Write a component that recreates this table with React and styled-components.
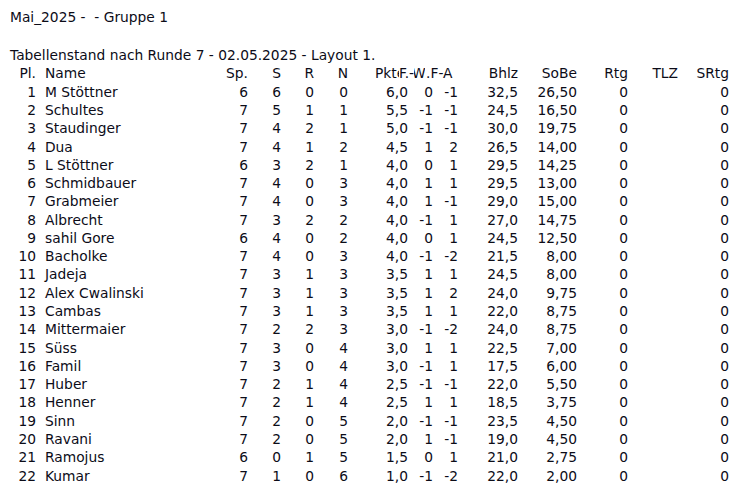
import React from 'react';
import styled, { createGlobalStyle } from 'styled-components';

const rows = [
    [1, 'M Stöttner', 6, 6, 0, 0, '6,0', 0, -1, '32,5', '26,50'],
    [2, 'Schultes', 7, 5, 1, 1, '5,5', -1, -1, '24,5', '16,50'],
    [3, 'Staudinger', 7, 4, 2, 1, '5,0', -1, -1, '30,0', '19,75'],
    [4, 'Dua', 7, 4, 1, 2, '4,5', 1, 2, '26,5', '14,00'],
    [5, 'L Stöttner', 6, 3, 2, 1, '4,0', 0, 1, '29,5', '14,25'],
    [6, 'Schmidbauer', 7, 4, 0, 3, '4,0', 1, 1, '29,5', '13,00'],
    [7, 'Grabmeier', 7, 4, 0, 3, '4,0', 1, -1, '29,0', '15,00'],
    [8, 'Albrecht', 7, 3, 2, 2, '4,0', -1, 1, '27,0', '14,75'],
    [9, 'sahil Gore', 6, 4, 0, 2, '4,0', 0, 1, '24,5', '12,50'],
    [10, 'Bacholke', 7, 4, 0, 3, '4,0', -1, -2, '21,5', '8,00'],
    [11, 'Jadeja', 7, 3, 1, 3, '3,5', 1, 1, '24,5', '8,00'],
    [12, 'Alex Cwalinski', 7, 3, 1, 3, '3,5', 1, 2, '24,0', '9,75'],
    [13, 'Cambas', 7, 3, 1, 3, '3,5', 1, 1, '22,0', '8,75'],
    [14, 'Mittermaier', 7, 2, 2, 3, '3,0', -1, -2, '24,0', '8,75'],
    [15, 'Süss', 7, 3, 0, 4, '3,0', 1, 1, '22,5', '7,00'],
    [16, 'Famil', 7, 3, 0, 4, '3,0', -1, 1, '17,5', '6,00'],
    [17, 'Huber', 7, 2, 1, 4, '2,5', -1, -1, '22,0', '5,50'],
    [18, 'Henner', 7, 2, 1, 4, '2,5', 1, 1, '18,5', '3,75'],
    [19, 'Sinn', 7, 2, 0, 5, '2,0', -1, -1, '23,5', '4,50'],
    [20, 'Ravani', 7, 2, 0, 5, '2,0', 1, -1, '19,0', '4,50'],
    [21, 'Ramojus', 6, 0, 1, 5, '1,5', 0, 1, '21,0', '2,75'],
    [22, 'Kumar', 7, 1, 0, 6, '1,0', -1, -2, '22,0', '2,00'],
];

export default function App(){
    return (
        <>
            <GlobalStyle />
            <Page>
                <Line>Mai_2025 -&nbsp; - Gruppe 1</Line>
                <Line $h={19.3} />
                <Line>Tabellenstand nach Runde 7 - 02.05.2025 - Layout 1.</Line>
                <Row $h={18.8}>
                    <Cell>Pl.</Cell>
                    <Cell left>Name</Cell>
                    <Cell>Sp.</Cell>
                    <Cell>S</Cell>
                    <Cell>R</Cell>
                    <Cell>N</Cell>
                    <Squeezed>
                        <Clip $w={24}>Pkte</Clip>
                        <span>F.-</span>
                        <Clip $w={11} $shift={-2}>W</Clip>
                        <Tail>.F-A</Tail>
                    </Squeezed>
                    <Cell>Bhlz</Cell>
                    <Cell>SoBe</Cell>
                    <Cell>Rtg</Cell>
                    <Cell>TLZ</Cell>
                    <Cell>SRtg</Cell>
                </Row>
                {
                    rows.map((r) =>
                        <Row key={r[0]}>
                            <Cell>{r[0]}</Cell>
                            <Cell left>{r[1]}</Cell>
                            {r.slice(2).map((v, i) => <Cell key={i}>{v}</Cell>)}
                            <Cell>0</Cell>
                            <Cell></Cell>
                            <Cell>0</Cell>
                        </Row>
                    )
                }
            </Page>
        </>
    );
}

const GlobalStyle = createGlobalStyle`
    body{
        margin:0;
        background:#FFF;
    }
`
const Page = styled.div`
    padding: 8px 0 0 10px;
    font-family: 'DejaVu Sans', sans-serif;
    font-size: 13.8px;
    color: #0c0c18;
    line-height: 18.29px;
`
const Line = styled.div`
    height: ${props => props.$h || 18.29}px;
    white-space: pre;
`
const Row = styled.div`
    display: grid;
    grid-template-columns: 26px 180px 32px 33px 33px 34px 60px 25px 25px 60px 59px 51px 50px 51px;
    height: ${props => props.$h || 18.29}px;
    white-space: nowrap;
`
const Cell = styled.div`
    text-align: ${props => props.left ? 'left' : 'right'};
    padding-left: ${props => props.left ? '9px' : '0'};
`
const Squeezed = styled.div`
    grid-column: span 3;
    display: flex;
    padding-left: 27px;
    overflow: hidden;
`
const Clip = styled.span`
    display: inline-block;
    width: ${props => props.$w}px;
    overflow: hidden;
    text-indent: ${props => props.$shift || 0}px;
`
const Tail = styled.span`
    margin-left: 1px;
`
